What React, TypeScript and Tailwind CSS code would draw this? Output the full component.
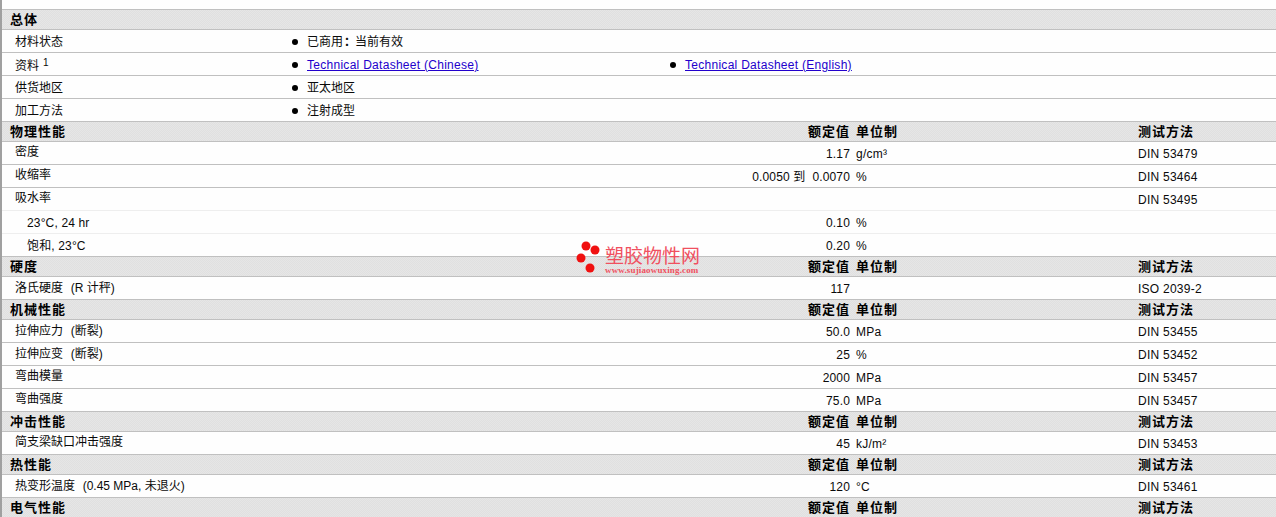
import type { ReactNode } from 'react';

const FONT = "font-['Liberation_Sans','Noto_Sans_CJK_SC',sans-serif]";

type Spec = {
  name: ReactNode;
  value?: ReactNode;
  unit?: string;
  test?: string;
  indent?: boolean;
  light?: boolean;
  mixed?: boolean;
};

function Note({ label, note }: { label: string; note: string }) {
  return (
    <>
      {label}
      {'\u00a0\u00a0'}
      <span className="ml-[1px]">{note}</span>
    </>
  );
}

function SectionHeader({ title, columns = true }: { title: string; columns?: boolean }) {
  return (
    <div className="grid h-5 grid-cols-[290px_558px_288px_1fr] items-center border-b border-[#c0c0c0] bg-[repeating-conic-gradient(#e0e0e0_0_25%,#e6e6e6_0_50%)] bg-[length:2px_2px] pb-[3px] text-[13px] font-bold tracking-[1px] text-black">
      <div className="pl-2">{title}</div>
      <div className="text-right">{columns && '额定值'}</div>
      <div className="pl-[6px]">{columns && '单位制'}</div>
      <div>{columns && '测试方法'}</div>
    </div>
  );
}

function SpecRow({ name, value, unit, test, indent, light, mixed }: Spec) {
  const labelOffset = indent ? 'pt-[1px]' : mixed ? '-mt-[1px]' : '-mt-[3px]';
  return (
    <div
      className={`grid h-[23px] grid-cols-[290px_558px_288px_1fr] items-center border-b pt-[2px] text-xs tracking-[0.25px] text-[#0a0a0a] ${
        light ? 'border-[#eeeeee]' : 'border-[#c0c0c0]'
      }`}
    >
      <div
        className={`${indent ? 'pl-[25px] tracking-[0.15px]' : 'pl-[13px] tracking-normal'} ${labelOffset} -translate-y-[1px] whitespace-nowrap`}
      >
        {name}
      </div>
      <div className="text-right tracking-[0.15px]">{value}</div>
      <div className="pl-[6px]">{unit}</div>
      <div>{test}</div>
    </div>
  );
}

function InfoRow({ name, items, sup }: { name: string; items: { text: ReactNode; link?: boolean }[]; sup?: string }) {
  return (
    <div className="grid h-[23px] grid-cols-[290px_378px_1fr] items-center border-b border-[#c0c0c0] pt-[2px] text-xs text-[#0a0a0a]">
      <div className={`pl-[13px] ${sup ? 'translate-y-[1px]' : ''}`}>
        {name}
        {sup && <sup className="-top-[4px] ml-1 text-[10px]">{sup}</sup>}
      </div>
      {items.map((item, i) => (
        <div key={i} className="flex items-center gap-[9px]">
          <span className="size-[6px] rounded-full bg-black" />
          {item.link ? (
            <a href="#" className="tracking-[0.28px] text-[#2200cc] underline">
              {item.text}
            </a>
          ) : (
            <span>{item.text}</span>
          )}
        </div>
      ))}
    </div>
  );
}

function Watermark() {
  return (
    <div className="absolute left-[574px] top-[240px] flex items-start">
      <svg width="29" height="35" viewBox="0 0 29 35" className="shrink-0">
        <circle cx="10" cy="6" r="4.5" fill="#f01010" />
        <circle cx="19" cy="10" r="4.5" fill="#f01010" />
        <circle cx="5" cy="18" r="4.5" fill="#f01010" />
        <circle cx="14" cy="28" r="4.5" fill="#f01010" />
      </svg>
      <div className="mt-[7px] flex flex-col items-start text-[#f0505f]">
        <span className="text-[19px] leading-[20px] font-normal">塑胶物性网</span>
        <span className="-mt-[1px] font-['Liberation_Serif',serif] text-[9px] leading-[8px] font-bold tracking-[0.15px]">
          www.sujiaowuxing.com
        </span>
      </div>
    </div>
  );
}

export default function App() {
  return (
    <div className={`${FONT} relative h-[517px] overflow-hidden border-l-2 border-[#a0a0a0] bg-[#fefefe]`}>
      <div className="box-content h-[9px] border-b border-[#c0c0c0]" />
      <SectionHeader title="总体" columns={false} />
      <InfoRow
        name="材料状态"
        items={[
          {
            text: (
              <>
                已商用<span className="inline-block translate-x-[1px] font-bold">：</span>当前有效
              </>
            ),
          },
        ]}
      />
      <InfoRow
        name="资料"
        sup="1"
        items={[
          { text: 'Technical Datasheet (Chinese)', link: true },
          { text: 'Technical Datasheet (English)', link: true },
        ]}
      />
      <InfoRow name="供货地区" items={[{ text: '亚太地区' }]} />
      <InfoRow name="加工方法" items={[{ text: '注射成型' }]} />

      <SectionHeader title="物理性能" />
      <SpecRow name="密度" value="1.17" unit="g/cm³" test="DIN 53479" />
      <SpecRow name="收缩率" value={'0.0050 到\u00a0\u00a00.0070'} unit="%" test="DIN 53464" />
      <SpecRow name="吸水率" test="DIN 53495" light />
      <SpecRow name="23°C, 24 hr" value="0.10" unit="%" indent light />
      <SpecRow name="饱和, 23°C" value="0.20" unit="%" indent />

      <SectionHeader title="硬度" />
      <SpecRow name={<Note label="洛氏硬度" note="(R 计秤)" />} value="117" test="ISO 2039-2" mixed />

      <SectionHeader title="机械性能" />
      <SpecRow name={<Note label="拉伸应力" note="(断裂)" />} value="50.0" unit="MPa" test="DIN 53455" mixed />
      <SpecRow name={<Note label="拉伸应变" note="(断裂)" />} value="25" unit="%" test="DIN 53452" mixed />
      <SpecRow name="弯曲模量" value="2000" unit="MPa" test="DIN 53457" />
      <SpecRow name="弯曲强度" value="75.0" unit="MPa" test="DIN 53457" />

      <SectionHeader title="冲击性能" />
      <SpecRow name="简支梁缺口冲击强度" value="45" unit="kJ/m²" test="DIN 53453" />

      <SectionHeader title="热性能" />
      <SpecRow name={<Note label="热变形温度" note="(0.45 MPa, 未退火)" />} value="120" unit="°C" test="DIN 53461" mixed />

      <SectionHeader title="电气性能" />
      <Watermark />
    </div>
  );
}
